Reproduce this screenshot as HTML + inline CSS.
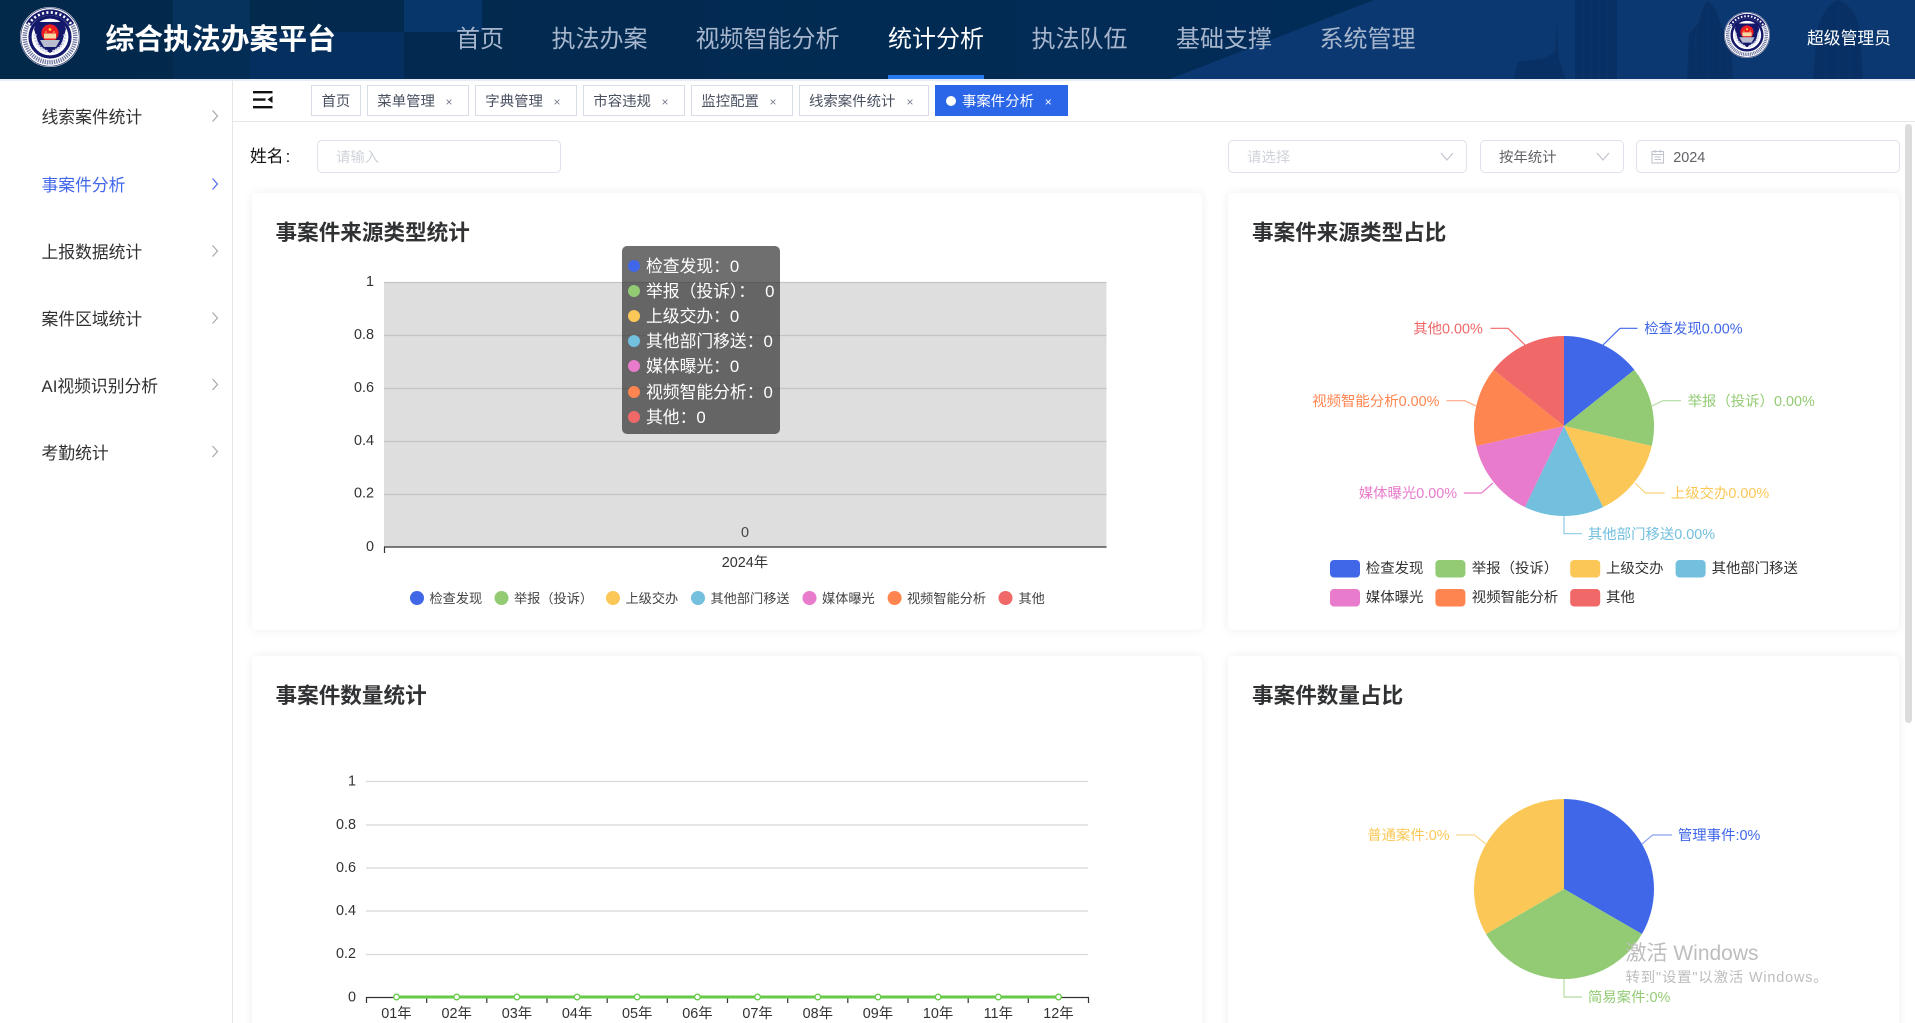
<!DOCTYPE html>
<html lang="zh-CN">
<head>
<meta charset="utf-8">
<title>综合执法办案平台</title>
<style>
*{box-sizing:border-box;margin:0;padding:0}
html,body{width:1915px;height:1023px;overflow:hidden;background:#fff}
body{position:relative;font-family:"Liberation Sans","Noto Sans CJK SC",sans-serif;color:#333}
.a{position:absolute;white-space:nowrap}
.nav{top:19.5px;height:40px;line-height:40px;font-size:24px;color:#a7b6cd}
.side{left:41.5px;height:26px;line-height:26px;font-size:16.8px;color:#303133}
.tab{top:85px;height:31px;border:1.2px solid #d8dce5;background:#fff}
.tt{top:88px;height:29px;line-height:29px;font-size:14.4px;color:#495060}
.x{top:88px;height:29px;line-height:29px;font-size:12px;color:#7b8090}
.inp{top:140px;height:33px;border:1.2px solid #dfe2ea;border-radius:5px;background:#fff}
.card{background:#fff;border-radius:5px;box-shadow:0 0 10px rgba(0,0,0,.07)}
.title{height:32px;line-height:32px;font-size:21.6px;font-weight:700;color:#303133}
svg text{font-family:"Liberation Sans","Noto Sans CJK SC",sans-serif}
</style>
</head>
<body>

<!-- header -->
<svg class="a" style="left:0;top:0" width="1915" height="80" viewBox="0 0 1915 80">
  <defs>
    <linearGradient id="hb" x1="0" x2="1" y1="0" y2="0">
      <stop offset="0" stop-color="#02294a"/>
      <stop offset="1" stop-color="#022d5e"/>
    </linearGradient>
    <symbol id="emblem" viewBox="0 0 60 60">
      <circle cx="30" cy="30" r="30" fill="#fff"/>
      <circle cx="30" cy="30" r="29.2" fill="none" stroke="#27306f" stroke-width=".7"/>
      <circle cx="30" cy="30" r="25.3" fill="none" stroke="#6f76a0" stroke-width="4.5" stroke-dasharray="1.3 1"/>
      <path d="M8.6 17.5A25 25 0 0 1 51.4 17.5" fill="none" stroke="#171c6b" stroke-width="6"/>
      <path d="M8.6 17.5A25 25 0 0 1 51.4 17.5" fill="none" stroke="#fff" stroke-width="2.6" stroke-dasharray="2 2.4"/>
      <circle cx="30" cy="30" r="20" fill="#fff" stroke="#14186a" stroke-width="3.2"/>
      <path d="M17 15H43L46 22 41 39 30 46 19 39 14 22Z" fill="#14186a"/>
      <path d="M15 27Q15 40 28 45M45 27Q45 40 32 45" fill="none" stroke="#cfd3e6" stroke-width="3" stroke-dasharray="2 1"/>
      <circle cx="30" cy="26" r="8.6" fill="#ee1c25"/>
      <circle cx="30" cy="22.5" r="1.4" fill="#f7d23c"/>
      <circle cx="26" cy="25" r=".8" fill="#f7d23c"/><circle cx="34" cy="25" r=".8" fill="#f7d23c"/>
      <rect x="24" y="26.5" width="12" height="5" fill="#f4d9a0"/>
      <path d="M20 33H40L36 40H24Z" fill="#b9bdd0"/>
    </symbol>
  </defs>
  <rect width="1915" height="80" fill="url(#hb)"/>
  <rect x="173" y="0" width="77" height="32" fill="#06335e"/>
  <rect x="173" y="32" width="77" height="47" fill="#032d55"/>
  <rect x="250" y="32" width="154" height="47" fill="#042f5e"/>
  <rect x="404" y="0" width="78" height="32" fill="#06366a"/>
  <rect x="404" y="32" width="78" height="47" fill="#02294f"/>
  <path d="M1374 0H1915V80H1167Z" fill="#0b3870"/>
  <g fill="#082f62" opacity=".85">
    <rect x="1575" y="0" width="42" height="80"/>
    <path d="M1557 24L1559 60 1566 80H1513L1518 62 1545 58 1555 52Z"/>
    <path d="M1708 0L1716 10 1722 28 1731 34 1733 80H1687L1689 34 1698 24 1703 8Z"/>
    <path d="M1838 0Q1855 6 1860 30L1863 80H1813L1817 30Q1824 6 1838 0Z"/>
  </g>
  <g stroke="#0b3870" stroke-width="1" opacity=".7">
    <path d="M1583 0V80M1591 0V80M1599 0V80M1607 0V80M1696 30V80M1708 6V80M1720 30V80M1826 20V80M1838 4V80M1850 20V80"/>
  </g>
  <rect x="888" y="75" width="96" height="5" fill="#2878f0"/>
  <use href="#emblem" x="20" y="7" width="60" height="60"/>
  <use href="#emblem" x="1724" y="12" width="46" height="46"/>
</svg>
<div class="a" style="left:0;top:79px;width:1915px;height:1.5px;background:#e6edf4"></div>

<div class="a" style="left:105.5px;top:20px;height:40px;line-height:40px;font-size:28.8px;font-weight:700;color:#fff">综合执法办案平台</div>
<div class="a nav" style="left:456px">首页</div>
<div class="a nav" style="left:551.5px">执法办案</div>
<div class="a nav" style="left:695.5px">视频智能分析</div>
<div class="a nav" style="left:888px;color:#fff">统计分析</div>
<div class="a nav" style="left:1031.5px">执法队伍</div>
<div class="a nav" style="left:1176px">基础支撑</div>
<div class="a nav" style="left:1319.5px">系统管理</div>
<div class="a" style="left:1807px;top:26px;height:26px;line-height:26px;font-size:16.8px;color:#fff">超级管理员</div>

<!-- sidebar -->
<div class="a" style="left:232px;top:80px;width:1.2px;height:943px;background:#e6e6e6"></div>
<div class="a side" style="top:105px">线索案件统计</div>
<div class="a side" style="top:173px;color:#4167e9">事案件分析</div>
<div class="a side" style="top:240px">上报数据统计</div>
<div class="a side" style="top:307px">案件区域统计</div>
<div class="a side" style="top:373.5px">AI视频识别分析</div>
<div class="a side" style="top:440.5px">考勤统计</div>
<svg class="a" style="left:207.5px;top:105px" width="14" height="360" viewBox="0 0 14 360" fill="none" stroke="#a3a3a8" stroke-width="1.1">
  <path d="M4.5 5.5L9.5 11 4.5 16.5"/>
  <path d="M4.5 73.5L9.5 79 4.5 84.5" stroke="#4167e9"/>
  <path d="M4.5 140.5L9.5 146 4.5 151.5"/>
  <path d="M4.5 207.5L9.5 213 4.5 218.5"/>
  <path d="M4.5 274L9.5 279.5 4.5 285"/>
  <path d="M4.5 341L9.5 346.5 4.5 352"/>
</svg>

<!-- tab bar -->
<div class="a" style="left:233px;top:121px;width:1682px;height:1px;background:#e6e6e6"></div>
<svg class="a" style="left:253px;top:90px" width="20" height="20" viewBox="0 0 20 20">
  <path d="M0 1h19.5v2.4H0zM0 8.4h12.5v2.4H0zM0 16h19.5v2.4H0z" fill="#111"/>
  <path d="M19.5 6v7l-5-3.5z" fill="#111"/>
</svg>
<div class="a tab" style="left:311px;width:50px"></div><div class="a tt" style="left:321.5px">首页</div>
<div class="a tab" style="left:367px;width:102px"></div><div class="a tt" style="left:377.3px">菜单管理</div><div class="a x" style="left:445.5px">×</div>
<div class="a tab" style="left:475px;width:102px"></div><div class="a tt" style="left:485.3px">字典管理</div><div class="a x" style="left:553.5px">×</div>
<div class="a tab" style="left:583px;width:102px"></div><div class="a tt" style="left:593.3px">市容违规</div><div class="a x" style="left:661.5px">×</div>
<div class="a tab" style="left:691px;width:102px"></div><div class="a tt" style="left:701.3px">监控配置</div><div class="a x" style="left:769.5px">×</div>
<div class="a tab" style="left:799px;width:130px"></div><div class="a tt" style="left:809px">线索案件统计</div><div class="a x" style="left:906.5px">×</div>
<div class="a tab" style="left:935px;width:133px;background:#2b66e9;border-color:#2b66e9"></div>
<div class="a" style="left:945.7px;top:96px;width:10px;height:10px;border-radius:50%;background:#fff"></div>
<div class="a tt" style="left:962px;color:#fff">事案件分析</div><div class="a x" style="left:1044.8px;color:#fff">×</div>

<!-- filters -->
<div class="a" style="left:250px;top:144px;height:26px;line-height:26px;font-size:16.8px;color:#111">姓名<span style="padding-left:2px">:</span></div>
<div class="a inp" style="left:317px;width:244px"></div>
<div class="a" style="left:336px;top:145px;height:26px;line-height:26px;font-size:14.4px;color:#d0d3da">请输入</div>
<div class="a inp" style="left:1228px;width:239px"></div>
<div class="a" style="left:1247px;top:145px;height:26px;line-height:26px;font-size:14.4px;color:#d0d3da">请选择</div>
<div class="a inp" style="left:1480px;width:144px"></div>
<div class="a" style="left:1499px;top:145px;height:26px;line-height:26px;font-size:14.4px;color:#606266">按年统计</div>
<div class="a inp" style="left:1636px;width:263.5px"></div>
<div class="a" style="left:1673.3px;top:145px;height:26px;line-height:26px;font-size:14.4px;color:#606266">2024</div>
<svg class="a" style="left:1436px;top:148px" width="180" height="18" viewBox="0 0 180 18" fill="none" stroke="#c0c4cc" stroke-width="1.2">
  <path d="M5 5L11 12 17 5"/>
  <path d="M161 5L167 12 173 5"/>
</svg>
<svg class="a" style="left:1651px;top:149px" width="14" height="15" viewBox="0 0 14 15" fill="none" stroke="#c0c4cc" stroke-width="1.1">
  <rect x="1" y="2.5" width="11.5" height="11.5"/>
  <path d="M1 5.5H12.5M4 1V3.5M9.5 1V3.5M3.5 8H10M3.5 10.5H10"/>
</svg>

<!-- cards -->
<div class="a card" style="left:252px;top:193px;width:950px;height:437px"></div>
<div class="a card" style="left:1228px;top:193px;width:671px;height:437px"></div>
<div class="a card" style="left:252px;top:656px;width:950px;height:400px"></div>
<div class="a card" style="left:1228px;top:656px;width:671px;height:400px"></div>
<div class="a title" style="left:275.5px;top:217px">事案件来源类型统计</div>
<div class="a title" style="left:1252px;top:217px">事案件来源类型占比</div>
<div class="a title" style="left:275.5px;top:680px">事案件数量统计</div>
<div class="a title" style="left:1252px;top:680px">事案件数量占比</div>

<!-- scrollbar -->
<div class="a" style="left:1905px;top:124px;width:7px;height:599px;border-radius:4px;background:#dcdcdc"></div>

<!-- charts -->
<svg class="a" style="left:0;top:0" width="1915" height="1023" viewBox="0 0 1915 1023">
  <!-- chart 1 -->
  <rect x="384" y="282" width="722.5" height="265" fill="#dedede"/>
  <g stroke="#c4c4c4" stroke-width="1.2">
    <path d="M384 282.5H1106.5M384 335.5H1106.5M384 388.5H1106.5M384 441.5H1106.5M384 494.5H1106.5"/>
  </g>
  <path d="M384 547H1106.5M384.5 547V553" stroke="#333" stroke-width="1.2" fill="none"/>
  <g font-size="14.4" fill="#333" text-anchor="end">
    <text x="374" y="286">1</text>
    <text x="374" y="339">0.8</text>
    <text x="374" y="392">0.6</text>
    <text x="374" y="445">0.4</text>
    <text x="374" y="497.5">0.2</text>
    <text x="374" y="551">0</text>
  </g>
  <text x="745" y="537" font-size="14.4" fill="#444" text-anchor="middle">0</text>
  <text x="745" y="567" font-size="14.4" fill="#333" text-anchor="middle">2024年</text>
  <g>
    <circle cx="417" cy="598" r="7" fill="#4067e8"/>
    <circle cx="501.5" cy="598" r="7" fill="#93cb74"/>
    <circle cx="613" cy="598" r="7" fill="#fbc857"/>
    <circle cx="698" cy="598" r="7" fill="#72bfde"/>
    <circle cx="809.5" cy="598" r="7" fill="#e87bcb"/>
    <circle cx="894.6" cy="598" r="7" fill="#ff8550"/>
    <circle cx="1005.5" cy="598" r="7" fill="#f06868"/>
  </g>
  <g font-size="13.2" fill="#444">
    <text x="429.5" y="603">检查发现</text>
    <text x="514" y="603">举报（投诉）</text>
    <text x="625.5" y="603">上级交办</text>
    <text x="710.5" y="603">其他部门移送</text>
    <text x="822" y="603">媒体曝光</text>
    <text x="907" y="603">视频智能分析</text>
    <text x="1018.5" y="603">其他</text>
  </g>

  <!-- tooltip -->
  <rect x="622" y="246" width="158" height="188" rx="5" fill="rgba(50,50,50,.7)"/>
  <circle cx="634" cy="266" r="6" fill="#4067e8"/>
  <circle cx="634" cy="291" r="6" fill="#93cb74"/>
  <circle cx="634" cy="316" r="6" fill="#fbc857"/>
  <circle cx="634" cy="341" r="6" fill="#72bfde"/>
  <circle cx="634" cy="366" r="6" fill="#e87bcb"/>
  <circle cx="634" cy="392" r="6" fill="#ff8550"/>
  <circle cx="634" cy="417" r="6" fill="#f06868"/>
  <g font-size="16.8" fill="#fff">
    <text x="646" y="272">检查发现：0</text>
    <text x="646" y="297">举报（投诉）：<tspan dx="10">0</tspan></text>
    <text x="646" y="322">上级交办：0</text>
    <text x="646" y="347">其他部门移送：0</text>
    <text x="646" y="372">媒体曝光：0</text>
    <text x="646" y="398">视频智能分析：0</text>
    <text x="646" y="423">其他：0</text>
  </g>

  <!-- pie 1 -->
  <path d="M1564 426L1564 336A90 90 0 0 1 1634.36 369.89Z" fill="#4067e8"/>
  <path d="M1564 426L1634.36 369.89A90 90 0 0 1 1651.74 446.03Z" fill="#93cb74"/>
  <path d="M1564 426L1651.74 446.03A90 90 0 0 1 1603.05 507.09Z" fill="#fbc857"/>
  <path d="M1564 426L1603.05 507.09A90 90 0 0 1 1524.95 507.09Z" fill="#72bfde"/>
  <path d="M1564 426L1524.95 507.09A90 90 0 0 1 1476.26 446.03Z" fill="#e87bcb"/>
  <path d="M1564 426L1476.26 446.03A90 90 0 0 1 1493.64 369.89Z" fill="#ff8550"/>
  <path d="M1564 426L1493.64 369.89A90 90 0 0 1 1564 336Z" fill="#f06868"/>
  <g fill="none" stroke-width="1.2">
    <path d="M1603 345L1620 328.3H1637.5" stroke="#4067e8"/>
    <path d="M1652 406L1663 400.7H1681" stroke="#b5dca0"/>
    <path d="M1635 483L1645.5 493H1664.6" stroke="#fbd27a"/>
    <path d="M1564 516V533.7H1582" stroke="#8ccbe5"/>
    <path d="M1493 483L1481.5 493H1463.8" stroke="#e87bcb"/>
    <path d="M1476 406L1464.7 400.7H1446.5" stroke="#ffa885"/>
    <path d="M1525 345L1508 328.3H1490.4" stroke="#f06868"/>
  </g>
  <g font-size="14.4">
    <text x="1644.2" y="333.5" fill="#4067e8">检查发现0.00%</text>
    <text x="1687.6" y="406" fill="#93cb74">举报（投诉）0.00%</text>
    <text x="1670.8" y="498" fill="#fbc857">上级交办0.00%</text>
    <text x="1587.9" y="539" fill="#72bfde">其他部门移送0.00%</text>
    <text x="1457.1" y="498" fill="#e87bcb" text-anchor="end">媒体曝光0.00%</text>
    <text x="1439.4" y="406" fill="#ff8550" text-anchor="end">视频智能分析0.00%</text>
    <text x="1482.8" y="333.5" fill="#f06868" text-anchor="end">其他0.00%</text>
  </g>
  <g>
    <rect x="1330" y="560" width="30" height="17.5" rx="4" fill="#4067e8"/>
    <rect x="1435.4" y="560" width="30" height="17.5" rx="4" fill="#93cb74"/>
    <rect x="1570.2" y="560" width="30" height="17.5" rx="4" fill="#fbc857"/>
    <rect x="1675.6" y="560" width="30" height="17.5" rx="4" fill="#72bfde"/>
    <rect x="1330" y="589" width="30" height="17.5" rx="4" fill="#e87bcb"/>
    <rect x="1435.4" y="589" width="30" height="17.5" rx="4" fill="#ff8550"/>
    <rect x="1570.2" y="589" width="30" height="17.5" rx="4" fill="#f06868"/>
  </g>
  <g font-size="14.4" fill="#333">
    <text x="1365.8" y="573">检查发现</text>
    <text x="1471.8" y="573">举报（投诉）</text>
    <text x="1606" y="573">上级交办</text>
    <text x="1711.6" y="573">其他部门移送</text>
    <text x="1365.8" y="602">媒体曝光</text>
    <text x="1471.8" y="602">视频智能分析</text>
    <text x="1606" y="602">其他</text>
  </g>

  <!-- chart 3 -->
  <path d="M366 781.5H1088M366 825H1088M366 868H1088M366 911H1088M366 954.5H1088" stroke="#d8d8d8" stroke-width="1.2"/>
  <path d="M366 997.5H1089M366.5 997V1003M426.7 997V1003M486.8 997V1003M547 997V1003M607.2 997V1003M667.3 997V1003M727.5 997V1003M787.7 997V1003M847.8 997V1003M908 997V1003M968.2 997V1003M1028.3 997V1003M1088.5 997V1003" stroke="#333" stroke-width="1.2" fill="none"/>
  <g font-size="14.4" fill="#333" text-anchor="end">
    <text x="356" y="785.5">1</text>
    <text x="356" y="829">0.8</text>
    <text x="356" y="872">0.6</text>
    <text x="356" y="915">0.4</text>
    <text x="356" y="958">0.2</text>
    <text x="356" y="1001.5">0</text>
  </g>
  <path d="M396 997H1058" stroke="#67c94a" stroke-width="3"/>
  <g fill="#fff" stroke="#67c94a" stroke-width="1.3">
    <circle cx="396.5" cy="997" r="2.8"/><circle cx="456.7" cy="997" r="2.8"/><circle cx="516.9" cy="997" r="2.8"/><circle cx="577.1" cy="997" r="2.8"/><circle cx="637.2" cy="997" r="2.8"/><circle cx="697.4" cy="997" r="2.8"/><circle cx="757.6" cy="997" r="2.8"/><circle cx="817.8" cy="997" r="2.8"/><circle cx="878" cy="997" r="2.8"/><circle cx="938.1" cy="997" r="2.8"/><circle cx="998.3" cy="997" r="2.8"/><circle cx="1058.5" cy="997" r="2.8"/>
  </g>
  <g font-size="14.4" fill="#333" text-anchor="middle">
    <text x="396.5" y="1018">01年</text><text x="456.7" y="1018">02年</text><text x="516.9" y="1018">03年</text><text x="577.1" y="1018">04年</text><text x="637.2" y="1018">05年</text><text x="697.4" y="1018">06年</text><text x="757.6" y="1018">07年</text><text x="817.8" y="1018">08年</text><text x="878" y="1018">09年</text><text x="938.1" y="1018">10年</text><text x="998.3" y="1018">11年</text><text x="1058.5" y="1018">12年</text>
  </g>

  <!-- pie 4 -->
  <path d="M1564 889L1564 799A90 90 0 0 1 1641.94 934Z" fill="#4067e8"/>
  <path d="M1564 889L1641.94 934A90 90 0 0 1 1486.06 934Z" fill="#93cb74"/>
  <path d="M1564 889L1486.06 934A90 90 0 0 1 1564 799Z" fill="#fbc857"/>
  <g fill="none" stroke-width="1.2">
    <path d="M1642 844L1652.6 835H1672" stroke="#8aa2f0"/>
    <path d="M1564 979V997H1582" stroke="#b5dca0"/>
    <path d="M1486 844L1474.4 835H1456.2" stroke="#fbd990"/>
  </g>
  <g font-size="14.4">
    <text x="1677.9" y="840" fill="#4067e8">管理事件:0%</text>
    <text x="1587.9" y="1002" fill="#93cb74">简易案件:0%</text>
    <text x="1449.6" y="840" fill="#fbc857" text-anchor="end">普通案件:0%</text>
  </g>

  <!-- watermark -->
  <text x="1625.5" y="960" font-size="21" fill="#bdbdbd">激活 Windows</text>
  <text x="1625.5" y="982" font-size="14.4" letter-spacing=".85" fill="#bdbdbd">转到"设置"以激活 Windows。</text>
</svg>

</body>
</html>
